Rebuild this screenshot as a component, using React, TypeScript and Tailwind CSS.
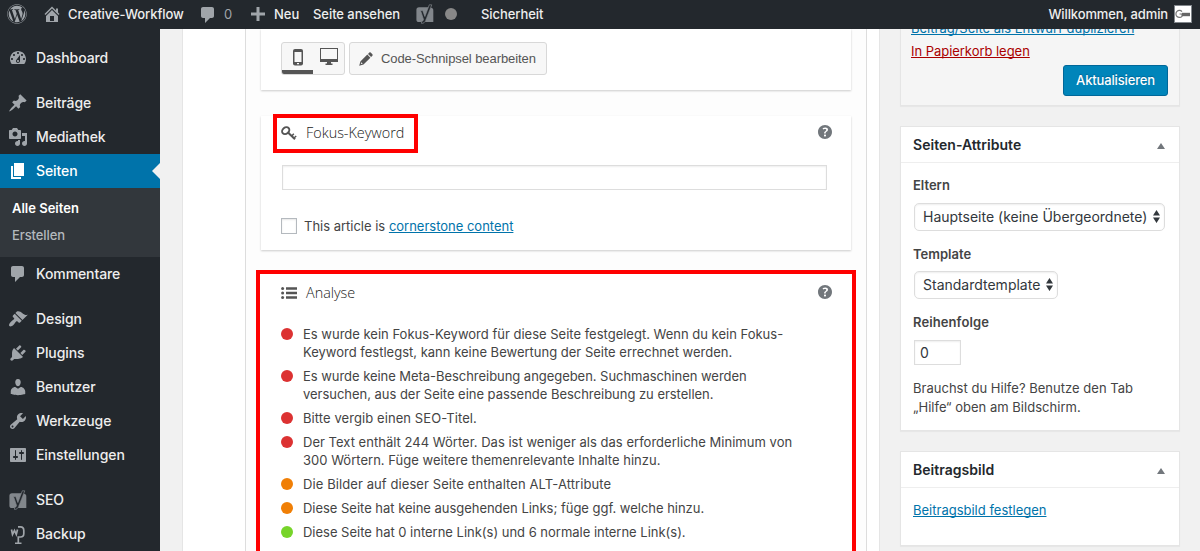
import type { ReactNode } from "react";
import { FaWordpress } from "react-icons/fa";

const ICONS = {
  home: "M16 8.5l1.53 1.53-1.06 1.06L10 4.6l-6.47 6.49-1.06-1.06L10 2.5l4 4v-2h2v4zm-6-2.46l6 5.99V18H4v-5.97zM12 17v-5H8v5h4z",
  comments: "M5 2h9c1.1 0 2 .9 2 2v7c0 1.1-.9 2-2 2h-2l-5 5v-5H5c-1.1 0-2-.9-2-2V4c0-1.1.9-2 2-2z",
  dashboard:
    "M3.76 16h12.48c1.1-1.37 1.76-3.11 1.76-5 0-4.42-3.58-8-8-8s-8 3.58-8 8c0 1.89.66 3.63 1.76 5zM10 4c.55 0 1 .45 1 1s-.45 1-1 1-1-.45-1-1 .45-1 1-1zM6 6c.55 0 1 .45 1 1s-.45 1-1 1-1-.45-1-1 .45-1 1-1zm8 0c.55 0 1 .45 1 1s-.45 1-1 1-1-.45-1-1 .45-1 1-1zm-5.370 5.550L12 7v6c0 1.100-.9 2-2 2s-2-.9-2-2c0-.57.240-1.080.630-1.450zM4 10c.55 0 1 .45 1 1s-.45 1-1 1-1-.45-1-1 .45-1 1-1zm12 0c.55 0 1 .45 1 1s-.45 1-1 1-1-.45-1-1 .45-1 1-1zm-5 3c0-.55-.45-1-1-1s-1 .45-1 1 .45 1 1 1 1-.45 1-1z",
  post: "M10.44 3.02l1.82-1.82 6.36 6.35-1.83 1.82c-1.05-.68-2.48-.57-3.41.36l-.75.75c-.92.93-1.04 2.35-.35 3.41l-1.83 1.82-2.41-2.41-2.8 2.79c-.42.42-3.38 2.71-3.8 2.29s1.86-3.39 2.28-3.81l2.79-2.79L4.1 9.36l1.83-1.82c1.05.69 2.48.57 3.4-.36l.75-.75c.93-.92 1.05-2.35.36-3.41z",
  media:
    "M13 11V4c0-.55-.45-1-1-1h-1.67L9 1H5L3.67 3H2c-.55 0-1 .45-1 1v7c0 .55.45 1 1 1h10c.55 0 1-.45 1-1zM7 4.5c1.38 0 2.5 1.12 2.5 2.5S8.38 9.5 7 9.5 4.5 8.38 4.5 7 5.62 4.5 7 4.5zM14 6h5v10.5c0 1.38-1.12 2.5-2.5 2.5S14 17.88 14 16.5s1.12-2.5 2.5-2.5c.17 0 .34.02.5.05V9h-3V6zm-4 8.05V13h2v3.5c0 1.38-1.12 2.5-2.5 2.5S7 17.88 7 16.5 8.12 14 9.5 14c.17 0 .34.02.5.05z",
  page: "M6 15V2h10v13H6zm-1 1h8v2H3V5h2v11z",
  appearance:
    "M14.48 11.06L7.41 3.99l1.5-1.5c.5-.56 2.3-.47 3.51.32 1.21.8 1.43 1.28 2.91 2.1 1.18.64 2.45 1.26 4.45.85zm-.71.71L6.7 4.7 4.93 6.47c-.39.39-.39 1.02 0 1.41l1.06 1.06c.39.39.39 1.03 0 1.42-.6.6-1.43 1.11-2.21 1.69-.35.26-.7.53-1.01.84C1.43 14.23.4 16.08 1.4 17.07c.99 1 2.84-.03 4.18-1.36.31-.31.58-.66.85-1.02.57-.78 1.08-1.61 1.69-2.21.39-.39 1.02-.39 1.41 0l1.06 1.06c.39.39 1.02.39 1.41 0z",
  plugins:
    "M13.11 4.36L9.87 7.6 8 5.73l3.24-3.24c.35-.34 1.05-.2 1.56.32.52.51.66 1.21.31 1.55zm-8 1.77l.91-1.12 9.01 9.01-1.19.84c-.71.71-2.63 1.16-3.82 1.16H6.14L4.9 17.26c-.59.59-1.54.59-2.12 0-.59-.58-.59-1.53 0-2.12l1.24-1.24v-3.88c0-1.13.4-3.19 1.09-3.89zm7.26 3.97l3.24-3.24c.34-.35 1.04-.21 1.55.31.52.51.66 1.21.31 1.55l-3.24 3.25z",
  users:
    "M10 9.25c-2.27 0-2.73-3.44-2.73-3.44C7 4.02 7.82 2 9.97 2c2.16 0 2.98 2.02 2.71 3.81 0 0-.41 3.44-2.68 3.44zm0 2.57L12.72 10c2.39 0 4.52 2.33 4.52 4.53v2.49s-3.65 1.13-7.24 1.13c-3.65 0-7.24-1.13-7.24-1.13v-2.49c0-2.25 1.94-4.48 4.47-4.48z",
  tools:
    "M16.68 9.77c-1.34 1.34-3.3 1.67-4.95.99l-5.41 6.52c-.99.99-2.59.99-3.58 0s-.99-2.59 0-3.57l6.52-5.42c-.68-1.65-.35-3.61.99-4.95 1.28-1.28 3.12-1.62 4.72-1.06l-2.89 2.89 2.82 2.82 2.86-2.87c.53 1.58.18 3.39-1.08 4.65zM3.81 16.21c.4.39 1.04.39 1.43 0 .4-.4.4-1.04 0-1.43-.39-.4-1.03-.4-1.43 0-.39.39-.39 1.03 0 1.43z",
  settings:
    "M18 16V4c0-.55-.45-1-1-1H3c-.55 0-1 .45-1 1v12c0 .55.45 1 1 1h14c.55 0 1-.45 1-1zM8 11h1c.55 0 1 .45 1 1s-.45 1-1 1H8v1.5c0 .28-.22.5-.5.5s-.5-.22-.5-.5V13H6c-.55 0-1-.45-1-1s.45-1 1-1h1V5.500c0-.28.22-.5.5-.5s.5.22.5.5V11zm5-2h-1c-.55 0-1-.45-1-1s.45-1 1-1h1V5.500c0-.28.22-.5.5-.5s.5.22.5.5V7h1c.55 0 1 .45 1 1s-.45 1-1 1h-1v5.500c0 .28-.22.5-.5.5s-.5-.22-.5-.5V9z",
  help: "M17 10c0-3.87-3.14-7-7-7-3.87 0-7 3.13-7 7s3.13 7 7 7c3.86 0 7-3.13 7-7zm-6.300 1.480H9.140v-.43c0-.38.08-.7.24-.98s.46-.57.88-.89c.41-.29.68-.53.81-.71.14-.18.2-.39.2-.62 0-.25-.09-.44-.28-.58-.19-.13-.45-.19-.79-.19-.58 0-1.25.15-2 .45l-.64-1.28c.87-.49 1.8-.74 2.77-.74.81 0 1.45.2 1.92.58.48.39.71.91.71 1.55 0 .43-.09.8-.29 1.11-.19.32-.57.67-1.11 1.06-.38.28-.61.49-.71.63-.1.15-.15.34-.15.57v.47zm-1.470 2.740c-.18-.17-.27-.42-.27-.73 0-.33.08-.58.26-.75s.43-.25.77-.25c.32 0 .57.09.75.26s.27.42.27.74c0 .3-.09.55-.27.72-.18.18-.43.27-.75.27-.33 0-.58-.09-.76-.26z",
};

function Dash({ name, className = "" }: { name: keyof typeof ICONS; className?: string }) {
  return (
    <svg viewBox="0 0 20 20" width="20" height="20" fill="currentColor" fillRule="evenodd" className={`shrink-0 ${className}`}>
      <path d={ICONS[name]} />
    </svg>
  );
}

function Yoast({ className = "" }: { className?: string }) {
  return (
    <svg viewBox="0 0 20 20" width="20" height="20" className={`shrink-0 ${className}`}>
      <path d="M4 3.200h10L8 18H4a2.600 2.600 0 0 1-2.600-2.600V5.800A2.600 2.600 0 0 1 4 3.200z" fill="#82878c" />
      <path d="M15.600 3.600C17.600 4 18.300 4.900 18.300 6.500V18H10z" fill="#82878c" />
      <path d="M14.300.8h2.500L10.600 16.600C9.800 18.600 8.600 19.400 6.500 19.400v-2.100c1.300 0 1.900-.7 2-1.900L5.500 6.500h2.200l2.200 6z" fill="#23282d" stroke="#82878c" strokeWidth=".7" />
    </svg>
  );
}

function BackupIcon() {
  return (
    <svg viewBox="0 0 20 20" width="20" height="20" className="shrink-0" fill="none" stroke="#a0a5aa" strokeWidth="1.700">
      <path d="M3.500 5.500l1 5 2-4 1.800 4 1.200-5" />
      <path d="M10 2.800h2.500q3.300 0 3.300 3.800v2.900q0 3.500-3.300 3.500H10.300v6.300M7 19.300h6.500" />
    </svg>
  );
}

function MenuItem({ icon, label, active = false }: { icon: ReactNode; label: string; active?: boolean }) {
  return (
    <div className={`relative flex h-[34px] items-center pl-2 ${active ? "bg-[#0073aa] text-white" : "text-[#a0a5aa]"}`}>
      {icon}
      <span className={`ml-2 whitespace-nowrap text-[14px] leading-[18px] font-medium tracking-[-0.1px] ${active ? "text-white" : "text-[#eee]"}`}>{label}</span>
      {active && <span className="absolute top-[9px] right-0 border-y-8 border-r-8 border-y-transparent border-r-[#f1f1f1]" />}
    </div>
  );
}

function AdminBar() {
  return (
    <header className="relative z-10 flex h-[29px] shrink-0 items-center bg-[#23282d] pb-[2px] text-[13px] leading-[18px] font-medium whitespace-nowrap text-[#eee]">
      <FaWordpress className="ml-[7px] shrink-0 text-[20px] text-[#a0a5aa]" />
      <Dash name="home" className="ml-[15px] text-[#a0a5aa]" />
      <span className="ml-[6px] w-[132px] tracking-[-0.06px]">Creative-Workflow</span>
      <Dash name="comments" className="-ml-[2px] mt-[3px] text-[#a0a5aa]" />
      <span className="ml-[6px] w-[27px] font-normal text-[#a0a5aa]">0</span>
      <svg width="14" height="14" viewBox="0 0 14 14" fill="#a0a5aa" className="shrink-0">
        <path d="M5.500 0h3v5.500H14v3H8.500V14h-3V8.500H0v-3h5.500z" />
      </svg>
      <span className="ml-[9px] w-[39px]">Neu</span>
      <span className="w-[102px] tracking-[-0.06px]">Seite ansehen</span>
      <Yoast />
      <span className="ml-[10px] h-3 w-3 rounded-full bg-[#888]" />
      <span className="ml-[24px] tracking-[-0.06px]">Sicherheit</span>
      <span className="ml-auto tracking-[-0.12px]">Willkommen, admin</span>
      <span className="mr-2 ml-[6px] flex h-[18px] w-[18px] items-center justify-center border border-[#82878c] bg-white">
        <svg width="16" height="16" viewBox="0 0 16 16">
          <path d="M7 5.600A3.500 3.500 0 1 0 7 10.300V8H4.500" fill="none" stroke="#777" strokeWidth="1.200" />
          <path d="M7 6.800h8v3.400H7z" fill="#666" />
        </svg>
      </span>
    </header>
  );
}

function SideMenu() {
  return (
    <nav className="w-40 shrink-0 bg-[#23282d] pt-3">
      <MenuItem icon={<Dash name="dashboard" />} label="Dashboard" />
      <div className="h-[11px]" />
      <MenuItem icon={<Dash name="post" />} label="Beiträge" />
      <MenuItem icon={<Dash name="media" />} label="Mediathek" />
      <MenuItem icon={<Dash name="page" />} label="Seiten" active />
      <div className="h-[69px] bg-[#32373c] pt-[7px] pl-3 text-[13px] leading-[27px] font-medium">
        <div className="font-semibold text-white">Alle Seiten</div>
        <div className="tracking-[-0.1px] text-[#b4b9be]">Erstellen</div>
      </div>
      <MenuItem icon={<Dash name="comments" />} label="Kommentare" />
      <div className="h-[11px]" />
      <MenuItem icon={<Dash name="appearance" />} label="Design" />
      <MenuItem icon={<Dash name="plugins" />} label="Plugins" />
      <MenuItem icon={<Dash name="users" />} label="Benutzer" />
      <MenuItem icon={<Dash name="tools" />} label="Werkzeuge" />
      <MenuItem icon={<Dash name="settings" />} label="Einstellungen" />
      <div className="h-[11px]" />
      <MenuItem icon={<Yoast />} label="SEO" />
      <MenuItem icon={<BackupIcon />} label="Backup" />
    </nav>
  );
}

function SnippetCard() {
  return (
    <section className="h-[61px] bg-white pt-[13px] pl-5 shadow-[0_1px_2px_rgba(0,0,0,0.2)]">
      <div className="flex gap-1">
        <div className="flex h-[33px] w-16 overflow-hidden rounded-[3px] border border-[#d8d8d8] bg-[#f7f7f7]">
          <div className="flex w-[31px] justify-center border-b-4 border-[#555] pt-[6px]">
            <svg width="10" height="17" viewBox="0 0 10 17">
              <rect width="10" height="16.500" rx="2" fill="#555" />
              <path d="M1.500 3h7v10h-7z" fill="#f7f7f7" />
              <path d="M4 14h2v1.300H4z" fill="#f7f7f7" />
            </svg>
          </div>
          <svg width="18" height="18" viewBox="0 0 18 18" fill="#555" className="mt-[5px] ml-[7px]">
            <path d="M0 0h18v14H0zM1 1v10h16V1z" fillRule="evenodd" />
            <path d="M7 14h4v1.500h1.500V17h-7v-1.500H7z" />
          </svg>
        </div>
        <button className="flex h-[33px] w-[198px] items-center rounded-[3px] border border-[#d8d8d8] bg-[#f7f7f7] font-['Liberation_Sans',sans-serif] text-[13px] whitespace-nowrap text-[#555]">
          <svg width="14" height="14" viewBox="0 0 14 14" fill="#555" className="ml-[9px]">
            <path d="M10.300.6q.7-.6 1.400 0l1.700 1.700q.6.7 0 1.400l-1.300 1.300-3.100-3.100zM8.300 2.600l3.100 3.100L4.500 12.600.2 13.800 1.400 9.500zM2.400 10.300l-.7 2 2-.7z" fillRule="evenodd" />
          </svg>
          <span className="ml-[8px] tracking-[-0.08px]">Code-Schnipsel bearbeiten</span>
        </button>
      </div>
    </section>
  );
}

function KeywordCard() {
  return (
    <section className="mt-[26px] h-[134px] bg-white shadow-[0_1px_2px_rgba(0,0,0,0.2)]">
      <div className="flex items-start">
        <h2 className="-mt-[2px] ml-3 flex h-[39px] w-[145px] items-center border-4 border-[#f00] pb-px font-['Open_Sans',sans-serif] text-[14.4px] font-light text-[#222]">
          <svg width="16" height="15" viewBox="0 0 16 15" className="ml-[4px]" fill="none" stroke="#555">
            <ellipse cx="4.700" cy="4.700" rx="3.900" ry="3.100" transform="rotate(-40 4.700 4.700)" strokeWidth="1.900" />
            <path d="M7 6.500l7 6.700" strokeWidth="2.100" />
            <path d="M10.800 10l2-2.200M13 12l2.200-2" strokeWidth="1.500" />
          </svg>
          <span className="ml-[9px]">Fokus-Keyword</span>
        </h2>
        <Dash name="help" className="mt-[6px] mr-[16px] ml-auto text-[#72777c]" />
      </div>
      <div className="mt-[12px] ml-[21px] h-[25px] w-[545px] border border-[#ddd] bg-white shadow-[inset_0_1px_2px_rgba(0,0,0,0.07)]" />
      <div className="mt-[28px] ml-5 flex h-4 items-center text-[13px] whitespace-nowrap text-[#444]">
        <span className="h-4 w-4 border border-[#b4b9be] bg-white shadow-[inset_0_1px_2px_rgba(0,0,0,0.1)]" />
        <span className="mt-px ml-[7px] tracking-[-0.01px]">
          This article is <a className="text-[#0073aa] underline">cornerstone content</a>
        </span>
      </div>
    </section>
  );
}

const RESULTS: { color: string; lines: [string, string][] }[] = [
  {
    color: "bg-[#dc3232]",
    lines: [
      ["Es wurde kein Fokus-Keyword für diese Seite festgelegt. Wenn du kein Fokus-", ""],
      ["Keyword festlegst, kann keine Bewertung der Seite errechnet werden.", ""],
    ],
  },
  {
    color: "bg-[#dc3232]",
    lines: [
      ["Es wurde keine Meta-Beschreibung angegeben. Suchmaschinen werden", "tracking-[-0.045px]"],
      ["versuchen, aus der Seite eine passende Beschreibung zu erstellen.", "tracking-[-0.03px]"],
    ],
  },
  { color: "bg-[#dc3232]", lines: [["Bitte vergib einen SEO-Titel.", "tracking-[0.08px]"]] },
  {
    color: "bg-[#dc3232]",
    lines: [
      ["Der Text enthält 244 Wörter. Das ist weniger als das erforderliche Minimum von", "tracking-[0.02px]"],
      ["300 Wörtern. Füge weitere themenrelevante Inhalte hinzu.", "tracking-[0.02px]"],
    ],
  },
  { color: "bg-[#f07f06]", lines: [["Die Bilder auf dieser Seite enthalten ALT-Attribute", "tracking-[0.09px]"]] },
  { color: "bg-[#f07f06]", lines: [["Diese Seite hat keine ausgehenden Links; füge ggf. welche hinzu.", "tracking-[-0.025px]"]] },
  { color: "bg-[#77d42a]", lines: [["Diese Seite hat 0 interne Link(s) und 6 normale interne Link(s).", "tracking-[-0.015px]"]] },
];

function AnalysisCard() {
  return (
    <section className="-mx-[5px] mt-[20px] h-[300px] w-[600px] border-4 border-[#f00] bg-white">
      <div className="flex h-[36px] items-center pl-[21px] font-['Open_Sans',sans-serif] text-[14.4px] font-light text-[#222]">
        <svg width="16" height="12" viewBox="0 0 16 12" fill="#555" className="mt-[2px]">
          <path d="M5 .3h11v2.400H5zM5 4.800h11v2.400H5zM5 9.300h11v2.400H5z" />
          <circle cx="1.600" cy="1.500" r="1.500" />
          <circle cx="1.600" cy="6" r="1.500" />
          <circle cx="1.600" cy="10.500" r="1.500" />
        </svg>
        <span className="mt-[2px] ml-[9px]">Analyse</span>
        <Dash name="help" className="mr-[17px] ml-auto text-[#72777c]" />
      </div>
      <ul className="mt-[15px] flex flex-col gap-[6px] pl-[21px] text-[13px] leading-[18px] whitespace-nowrap text-[#444]">
        {RESULTS.map((r) => (
          <li key={r.lines[0][0]} className="flex">
            <span className={`mt-[3px] h-3 w-3 shrink-0 rounded-full ${r.color}`} />
            <div className="ml-[10px]">
              {r.lines.map(([text, tracking]) => (
                <div key={text} className={tracking}>
                  {text}
                </div>
              ))}
            </div>
          </li>
        ))}
      </ul>
    </section>
  );
}

function BoxHeader({ title }: { title: string }) {
  return (
    <div className="flex h-9 items-center border-b border-[#eee] pr-[14px] pl-3 text-[14px] font-semibold text-[#23282d]">
      <span className="tracking-[0.03px]">{title}</span>
      <span className="mt-[2px] ml-auto border-x-4 border-b-[6px] border-x-transparent border-b-[#72777c]" />
    </div>
  );
}

function Select({ label, className }: { label: string; className: string }) {
  return (
    <div className={`ml-px flex h-7 items-center rounded-[5px] border border-[#ddd] bg-white pr-1 pb-px pl-2 text-[14px] whitespace-nowrap text-[#32373c] shadow-[inset_0_1px_2px_rgba(0,0,0,0.07)] ${className}`}>
      {label}
      <svg width="7" height="13" viewBox="0 0 7 13" fill="#32373c" className="ml-auto shrink-0">
        <path d="M3.500 0L7 5.500H0zM0 7.500h7L3.500 13z" />
      </svg>
    </div>
  );
}

function SideColumn() {
  return (
    <aside className="ml-5 w-[280px] shrink-0 text-[13px] text-[#444]">
      <section className="h-[77px] overflow-hidden border border-t-0 border-[#e5e5e5] bg-[#f5f5f5] px-[10px] whitespace-nowrap shadow-[0_1px_1px_rgba(0,0,0,0.04)]">
        <div className="-mt-[10px] leading-[19px]">
          <a className="text-[#0073aa] underline">Beitrag/Seite als Entwurf duplizieren</a>
        </div>
        <div className="mt-[4px] leading-[19px] tracking-[-0.04px]">
          <a className="text-[#a00] underline">In Papierkorb legen</a>
        </div>
        <button className="mt-[4px] mr-px ml-auto block h-[31px] w-[105px] rounded-[3px] border border-[#006799] bg-[#0085ba] text-[13px] font-medium tracking-[-0.15px] text-white [text-shadow:0_-1px_1px_#006799]">Aktualisieren</button>
      </section>
      <section className="mt-5 h-[305px] border border-[#e5e5e5] bg-white shadow-[0_1px_1px_rgba(0,0,0,0.04)]">
        <BoxHeader title="Seiten-Attribute" />
        <div className="px-3 pt-[13px] leading-[19px]">
          <div className="font-semibold">Eltern</div>
          <Select label="Hauptseite (keine Übergeordnete)" className="mt-[8px] w-[251px]" />
          <div className="mt-[14px] font-semibold">Template</div>
          <Select label="Standardtemplate" className="mt-[7px] w-[144px]" />
          <div className="mt-[14px] font-semibold tracking-[0.1px]">Reihenfolge</div>
          <div className="mt-[8px] ml-px flex h-[25px] w-[47px] items-center border border-[#ddd] pl-[5px] text-[14px] text-[#32373c] shadow-[inset_0_1px_2px_rgba(0,0,0,0.07)]">0</div>
          <p className="mt-[14px] whitespace-nowrap tracking-[0.02px]">
            Brauchst du Hilfe? Benutze den Tab
            <br />
            „Hilfe“ oben am Bildschirm.
          </p>
        </div>
      </section>
      <section className="mt-5 h-[95px] border border-[#e5e5e5] bg-white shadow-[0_1px_1px_rgba(0,0,0,0.04)]">
        <BoxHeader title="Beitragsbild" />
        <div className="px-3 pt-[13px] leading-[19px]">
          <a className="text-[#0073aa] underline">Beitragsbild festlegen</a>
        </div>
      </section>
    </aside>
  );
}

export default function App() {
  return (
    <div className="flex h-[551px] w-[1200px] flex-col overflow-hidden bg-[#f1f1f1] font-['Inter',sans-serif] [text-decoration-skip-ink:none]">
      <AdminBar />
      <div className="flex min-h-0 flex-1">
        <SideMenu />
        <main className="ml-[22px] flex w-[698px] shrink-0 overflow-hidden border-x border-[#e5e5e5] bg-white pl-[62px]">
          <div className="h-[560px] w-[622px] shrink-0 border-x border-[#ddd] bg-[#fdfdfd] px-[15px]">
            <div className="w-[590px]">
              <SnippetCard />
              <KeywordCard />
              <AnalysisCard />
            </div>
          </div>
        </main>
        <SideColumn />
      </div>
    </div>
  );
}
